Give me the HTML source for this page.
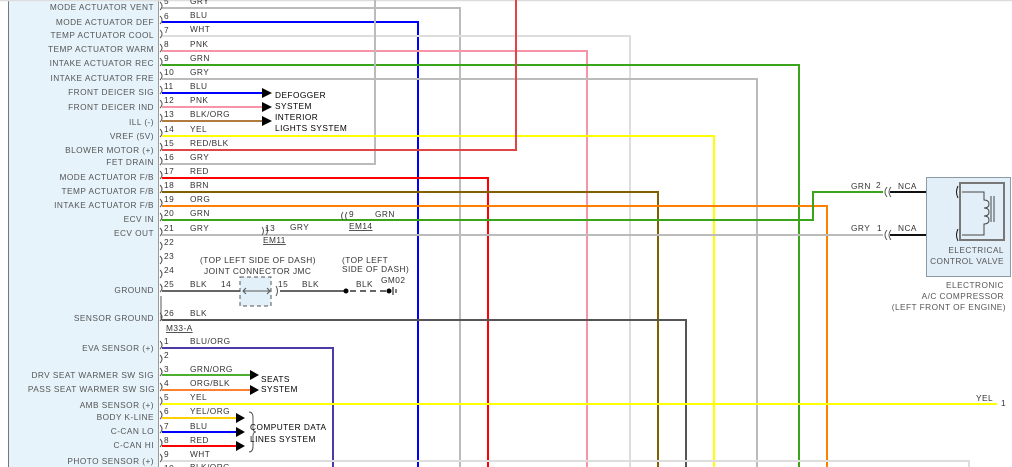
<!DOCTYPE html>
<html><head><meta charset="utf-8"><style>
html,body{margin:0;padding:0;background:#fff;width:1012px;height:467px;overflow:hidden}
svg{display:block}
text{font-family:"Liberation Sans",sans-serif;font-size:8.3px;letter-spacing:0.45px;fill:#333}
.l{text-anchor:end;fill:#555}
.k{fill:#000}
</style></head><body>
<svg width="1012" height="467" viewBox="0 0 1012 467">
<rect x="8" y="0" width="150" height="467" fill="#e6f3fb"/>
<line x1="8.5" y1="0" x2="8.5" y2="467" stroke="#777" stroke-width="1"/>
<line x1="158.5" y1="0" x2="158.5" y2="467" stroke="#999" stroke-width="1"/>
<line x1="0" y1="0.5" x2="1012" y2="0.5" stroke="#ddd" stroke-width="1.5"/>
<g fill="none" stroke-width="2">
<polyline points="162,8 460,8 460,467" stroke="#bbb"/>
<polyline points="162,22 418,22 418,467" stroke="#0000ff"/>
<polyline points="162,36 630,36 630,467" stroke="#ddd"/>
<polyline points="162,51 587,51 587,467" stroke="#f795a8"/>
<polyline points="162,65 799,65 799,467" stroke="#3aa51a"/>
<polyline points="162,79 757,79 757,467" stroke="#bbb"/>
<polyline points="162,164 375,164 375,0" stroke="#bbb"/>
<line x1="162" y1="93" x2="262" y2="93" stroke="#0000ff"/>
<line x1="162" y1="107" x2="262" y2="107" stroke="#f795a8"/>
<line x1="162" y1="121" x2="262" y2="121" stroke="#b07a40"/>
<polyline points="162,136 714,136 714,467" stroke="#ffff00"/>
<polyline points="162,150 516,150 516,0" stroke="#e04545"/>
<polyline points="162,178 488,178 488,467" stroke="#ff0000"/>
<polyline points="162,192 658,192 658,467" stroke="#806000"/>
<polyline points="162,206 827,206 827,467" stroke="#ff8000"/>
<polyline points="162,220 813,220 813,192 883,192" stroke="#3aa51a"/>
<line x1="162" y1="235" x2="883" y2="235" stroke="#bbb"/>
<polyline points="162,291 245,291" stroke="#666"/>
<line x1="280" y1="291" x2="346" y2="291" stroke="#666"/>
<line x1="350" y1="291" x2="388" y2="291" stroke="#666" stroke-dasharray="6,4"/>
<polyline points="162,320 686,320 686,467" stroke="#555"/>
<polyline points="162,348 333,348 333,467" stroke="#4b3aa8"/>
<line x1="162" y1="375" x2="250" y2="375" stroke="#4caf30"/>
<line x1="162" y1="390" x2="250" y2="390" stroke="#ff8030"/>
<line x1="162" y1="404" x2="997" y2="404" stroke="#ffff00"/>
<line x1="162" y1="418" x2="236" y2="418" stroke="#ffd000"/>
<line x1="162" y1="432" x2="236" y2="432" stroke="#0000ff"/>
<line x1="162" y1="446" x2="236" y2="446" stroke="#ff0000"/>
<polyline points="162,461 969,461 969,467" stroke="#ddd"/>
<line x1="890" y1="192" x2="960" y2="192" stroke="#111"/>
<line x1="890" y1="235" x2="960" y2="235" stroke="#111"/>
</g>
<g fill="#000">
<polygon points="262,88 272,93 262,98"/><polygon points="262,102 272,107 262,112"/><polygon points="262,116 272,121 262,126"/>
<polygon points="250,370 259,375 250,380"/><polygon points="250,385 259,390 250,395"/>
<polygon points="236,413 245,418 236,423"/><polygon points="236,427 245,432 236,437"/><polygon points="236,441 245,446 236,451"/>
<circle cx="346" cy="291" r="2.5"/><circle cx="389" cy="291" r="2.5"/>
</g>
<line x1="393" y1="287" x2="393" y2="295" stroke="#000"/><line x1="396" y1="289" x2="396" y2="293" stroke="#000"/>
<!-- connector marks -->
<g fill="none" stroke="#555" stroke-width="1">
<path d="M160,2 q4,4 0,8 M160,16 q4,4 0,8 M160,30 q4,4 0,8 M160,44 q4,4 0,8 M160,58 q4,4 0,8 M160,72 q4,4 0,8 M160,86 q4,4 0,8 M160,100 q4,4 0,8 M160,114 q4,4 0,8 M160,129 q4,4 0,8 M160,143 q4,4 0,8 M160,157 q4,4 0,8 M160,171 q4,4 0,8 M160,185 q4,4 0,8 M160,199 q4,4 0,8 M160,213 q4,4 0,8 M160,228 q4,4 0,8 M160,242 q4,4 0,8 M160,256 q4,4 0,8 M160,270 q4,4 0,8 M160,284 q4,4 0,8 M160,313 q4,4 0,8 M160,341 q4,4 0,8 M160,355 q4,4 0,8 M160,368 q4,4 0,8 M160,383 q4,4 0,8 M160,397 q4,4 0,8 M160,411 q4,4 0,8 M160,425 q4,4 0,8 M160,439 q4,4 0,8 M160,454 q4,4 0,8"/>
<path d="M161,296 L161,318 q0,2 2,2"/>
<path d="M343,212 q-3,4 0,8 M347,212 q-3,4 0,8 M262,227 q3,4 0,8 M266,227 q3,4 0,8 M887,187 q-4,5 0,10 M891,187 q-4,5 0,10 M887,230 q-4,5 0,10 M891,230 q-4,5 0,10"/>
<path d="M248,286 q-3,5 0,10 M276,286 q3,5 0,10"/>
<path d="M249,412 q4,0 4,6 l0,10 q0,4 3,4 q-3,0 -3,4 l0,10 q0,6 -4,6"/>
</g>
<rect x="240" y="277" width="31" height="29" fill="#e2f0fa" stroke="#555" stroke-dasharray="4,3"/>
<line x1="243" y1="291" x2="270" y2="291" stroke="#555"/><path d="M246,288 l-3,3 3,3 M267,288 l3,3 -3,3" fill="none" stroke="#555"/>
<!-- compressor -->
<rect x="926.5" y="177.5" width="84" height="99" fill="#e3eff8" stroke="#8a9aa6"/>
<rect x="960" y="183" width="44" height="57" fill="none" stroke="#777" stroke-width="2"/>
<path d="M958,186 q-3,6 0,12 M958,229 q-3,6 0,12" fill="none" stroke="#111"/>
<path d="M962,192 l22,0 0,8 q5,0 5,4 q0,4 -5,4 q5,0 5,4 q0,4 -5,4 q5,0 5,4 q0,4 -5,4 l0,11 -22,0" fill="none" stroke="#444"/>
<line x1="991" y1="196" x2="991" y2="222" stroke="#444"/><line x1="994" y1="196" x2="994" y2="222" stroke="#444"/>
<text x="1004" y="253" class="l">ELECTRICAL</text>
<text x="1004" y="264" class="l">CONTROL VALVE</text>
<text x="1004" y="288" class="l">ELECTRONIC</text>
<text x="1004" y="299" class="l">A/C COMPRESSOR</text>
<text x="1006" y="310" class="l">(LEFT FRONT OF ENGINE)</text>
<text x="851" y="189">GRN</text><text x="876" y="188">2</text><text x="898" y="189">NCA</text>
<text x="851" y="231">GRY</text><text x="877" y="231">1</text><text x="898" y="231">NCA</text>
<text x="976" y="401">YEL</text><text x="1001" y="406">1</text>
<!-- left labels -->
<g class="l">
<text x="154" y="10" class="l">MODE ACTUATOR VENT</text>
<text x="154" y="25" class="l">MODE ACTUATOR DEF</text>
<text x="154" y="38" class="l">TEMP ACTUATOR COOL</text>
<text x="154" y="52" class="l">TEMP ACTUATOR WARM</text>
<text x="154" y="66" class="l">INTAKE ACTUATOR REC</text>
<text x="154" y="81" class="l">INTAKE ACTUATOR FRE</text>
<text x="154" y="95" class="l">FRONT DEICER SIG</text>
<text x="154" y="110" class="l">FRONT DEICER IND</text>
<text x="154" y="125" class="l">ILL (-)</text>
<text x="154" y="139" class="l">VREF (5V)</text>
<text x="154" y="153" class="l">BLOWER MOTOR (+)</text>
<text x="154" y="165" class="l">FET DRAIN</text>
<text x="154" y="180" class="l">MODE ACTUATOR F/B</text>
<text x="154" y="194" class="l">TEMP ACTUATOR F/B</text>
<text x="154" y="208" class="l">INTAKE ACTUATOR F/B</text>
<text x="154" y="222" class="l">ECV IN</text>
<text x="154" y="236" class="l">ECV OUT</text>
<text x="154" y="293" class="l">GROUND</text>
<text x="154" y="321" class="l">SENSOR GROUND</text>
<text x="154" y="351" class="l">EVA SENSOR (+)</text>
<text x="154" y="378" class="l">DRV SEAT WARMER SW SIG</text>
<text x="155" y="392" class="l">PASS SEAT WARMER SW SIG</text>
<text x="154" y="408" class="l">AMB SENSOR (+)</text>
<text x="154" y="420" class="l">BODY K-LINE</text>
<text x="154" y="434" class="l">C-CAN LO</text>
<text x="154" y="448" class="l">C-CAN HI</text>
<text x="154" y="464" class="l">PHOTO SENSOR (+)</text>
</g>
<!-- pin numbers and colors -->
<g>
<text x="164" y="4">5</text><text x="190" y="4">GRY</text>
<text x="164" y="19">6</text><text x="190" y="18">BLU</text>
<text x="164" y="33">7</text><text x="190" y="32">WHT</text>
<text x="164" y="47">8</text><text x="190" y="47">PNK</text>
<text x="164" y="61">9</text><text x="190" y="61">GRN</text>
<text x="164" y="75">10</text><text x="190" y="75">GRY</text>
<text x="164" y="89">11</text><text x="190" y="89">BLU</text>
<text x="164" y="103">12</text><text x="190" y="103">PNK</text>
<text x="164" y="117">13</text><text x="190" y="117">BLK/ORG</text>
<text x="164" y="132">14</text><text x="190" y="132">YEL</text>
<text x="164" y="146">15</text><text x="190" y="146">RED/BLK</text>
<text x="164" y="160">16</text><text x="190" y="160">GRY</text>
<text x="164" y="174">17</text><text x="190" y="174">RED</text>
<text x="164" y="188">18</text><text x="190" y="188">BRN</text>
<text x="164" y="202">19</text><text x="190" y="202">ORG</text>
<text x="164" y="216">20</text><text x="190" y="216">GRN</text>
<text x="164" y="231">21</text><text x="190" y="231">GRY</text>
<text x="164" y="245">22</text>
<text x="164" y="259">23</text>
<text x="164" y="273">24</text>
<text x="164" y="287">25</text><text x="190" y="287">BLK</text>
<text x="164" y="316">26</text><text x="190" y="316">BLK</text>
<text x="166" y="331" text-decoration="underline">M33-A</text>
<text x="164" y="344">1</text><text x="190" y="344">BLU/ORG</text>
<text x="164" y="358">2</text>
<text x="164" y="372">3</text><text x="190" y="372">GRN/ORG</text>
<text x="164" y="386">4</text><text x="190" y="386">ORG/BLK</text>
<text x="164" y="400">5</text><text x="190" y="400">YEL</text>
<text x="164" y="414">6</text><text x="190" y="414">YEL/ORG</text>
<text x="164" y="429">7</text><text x="190" y="429">BLU</text>
<text x="164" y="443">8</text><text x="190" y="443">RED</text>
<text x="164" y="457">9</text><text x="190" y="457">WHT</text>
<text x="164" y="471">10</text><text x="190" y="470">BLK/ORG</text>
</g>
<g class="k">
<text x="275" y="98" class="k">DEFOGGER</text>
<text x="275" y="109" class="k">SYSTEM</text>
<text x="275" y="120" class="k">INTERIOR</text>
<text x="275" y="131" class="k">LIGHTS SYSTEM</text>
<text x="261" y="382" class="k">SEATS</text>
<text x="261" y="392" class="k">SYSTEM</text>
<text x="250" y="430" class="k">COMPUTER DATA</text>
<text x="250" y="442" class="k">LINES SYSTEM</text>
</g>
<text x="349" y="217">9</text><text x="375" y="217">GRN</text>
<text x="349" y="229" text-decoration="underline">EM14</text>
<text x="265" y="231">13</text><text x="290" y="230">GRY</text>
<text x="263" y="243" text-decoration="underline">EM11</text>
<text x="200" y="263">(TOP LEFT SIDE OF DASH)</text>
<text x="204" y="274">JOINT CONNECTOR JMC</text>
<text x="221" y="287">14</text><text x="278" y="287">15</text><text x="302" y="287">BLK</text>
<text x="342" y="263">(TOP LEFT</text>
<text x="342" y="272">SIDE OF DASH)</text>
<text x="356" y="287">BLK</text><text x="381" y="283">GM02</text>
</svg>
</body></html>
